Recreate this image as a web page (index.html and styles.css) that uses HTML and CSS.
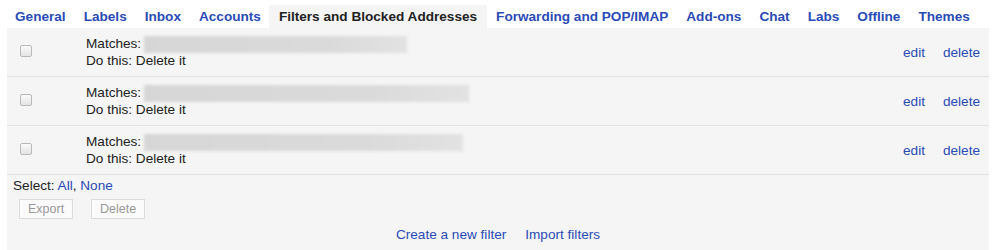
FILE: index.html
```html
<!DOCTYPE html>
<html lang="en">
<head>
    <meta charset="UTF-8">
    <title>Settings - Filters</title>
    <link rel="stylesheet" href="styles.css">
</head>
<body>
    <!-- Settings tabs -->
    <div class="tabs">
        <a class="tab" href="#">General</a>
        <a class="tab" href="#">Labels</a>
        <a class="tab" href="#">Inbox</a>
        <a class="tab" href="#">Accounts</a>
        <span class="tab active">Filters and Blocked Addresses</span>
        <a class="tab" href="#">Forwarding and POP/IMAP</a>
        <a class="tab" href="#">Add-ons</a>
        <a class="tab" href="#">Chat</a>
        <a class="tab" href="#">Labs</a>
        <a class="tab" href="#">Offline</a>
        <a class="tab" href="#">Themes</a>
    </div>

    <div class="panel">
        <!-- Filter rows -->
        <div class="filter-row">
            <div class="check-cell"><span class="checkbox"></span></div>
            <div class="filter-text">
                <div class="matches">Matches: <span class="redacted" style="width: 263px"></span></div>
                <div>Do this: Delete it</div>
            </div>
            <div class="actions"><a href="#">edit</a><a href="#">delete</a></div>
        </div>
        <div class="filter-row">
            <div class="check-cell"><span class="checkbox"></span></div>
            <div class="filter-text">
                <div class="matches">Matches: <span class="redacted" style="width: 325px"></span></div>
                <div>Do this: Delete it</div>
            </div>
            <div class="actions"><a href="#">edit</a><a href="#">delete</a></div>
        </div>
        <div class="filter-row">
            <div class="check-cell"><span class="checkbox"></span></div>
            <div class="filter-text">
                <div class="matches">Matches: <span class="redacted" style="width: 319px"></span></div>
                <div>Do this: Delete it</div>
            </div>
            <div class="actions"><a href="#">edit</a><a href="#">delete</a></div>
        </div>

        <!-- Footer -->
        <div class="select-line">Select: <a href="#">All</a>, <a href="#">None</a></div>
        <div class="buttons">
            <button class="btn" disabled>Export</button>
            <button class="btn" disabled>Delete</button>
        </div>
        <div class="bottom-links">
            <a href="#">Create a new filter</a>
            <a href="#">Import filters</a>
        </div>
    </div>
</body>
</html>
```
FILE: styles.css
```css
/* Global */
body {
    margin: 0;
    padding: 5px 11px 0 6px;
    font-family: "Liberation Sans", Arial, sans-serif;
    font-size: 13.6px;
    color: #222;
    background-color: #fff;
}

a {
    color: #2a4bb5;
    text-decoration: none;
}

/* Tabs */
.tabs {
    display: flex;
    height: 23px;
}

.tab {
    padding: 0 9px;
    line-height: 23px;
    font-weight: bold;
    font-size: 13.6px;
    color: #2a4bb5;
}

.tab.active {
    color: #222;
    background-color: #f5f5f5;
    margin: 0 0 0 -1px;
    padding: 0 10px;
}

/* Panel */
.panel {
    background-color: #f5f5f5;
    height: 230px;
    margin-left: 1px;
}

.filter-row {
    display: flex;
    align-items: center;
    height: 48px;
    border-bottom: 1px solid #e2e2e2;
}

.check-cell {
    width: 79px;
    padding-left: 13px;
    box-sizing: border-box;
}

.checkbox {
    display: block;
    width: 10px;
    height: 10px;
    border: 1px solid #b9b9b9;
    border-radius: 2px;
    background: linear-gradient(#fafafa, #e4e4e4);
    margin-top: -2px;
}

.filter-text {
    flex: 1;
    line-height: 16px;
    color: #222;
}

.matches {
    display: flex;
    align-items: center;
}

.redacted {
    display: inline-block;
    height: 17px;
    margin-left: 3px;
    background: linear-gradient(to right, #d6d6d6, #dadada 70%, #e2e2e2);
    filter: blur(1.5px);
}

.actions {
    display: flex;
    gap: 18px;
    padding-right: 9px;
}

/* Footer */
.select-line {
    padding: 3px 0 0 6px;
    line-height: 16px;
}

.buttons {
    display: flex;
    gap: 18px;
    padding: 5px 0 0 12px;
}

.btn {
    font-family: "Liberation Sans", Arial, sans-serif;
    font-size: 12.5px;
    color: #999;
    background-color: #fbfbfb;
    border: 1px solid #dcdcdc;
    height: 20px;
    padding: 0 8px;
    width: 54px;
}

.bottom-links {
    display: flex;
    justify-content: center;
    gap: 19px;
    padding-top: 8px;
    line-height: 16px;
}
```
